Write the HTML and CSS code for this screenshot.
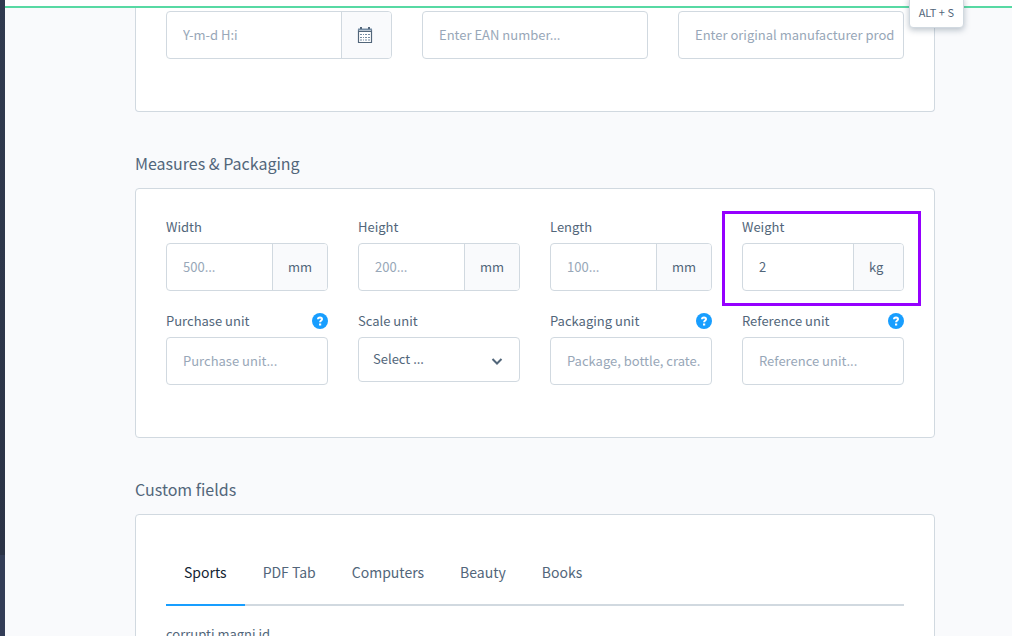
FILE: index.html
```html
<!DOCTYPE html>
<html lang="en">
<head>
<meta charset="utf-8">
<title>Product details</title>
<link rel="stylesheet" href="styles.css">
</head>
<body>
<div class="app">
  <aside class="sidebar"><div class="sidebar-menu"></div><div class="sidebar-footer"></div></aside>
  <div class="page">
    <header class="topbar"><div class="shortcut" role="tooltip">ALT + S</div></header>
    <main class="content">
      <section class="card card-continued">
        <div class="row row-three">
          <div class="control">
            <input class="input" type="text" placeholder="Y-m-d H:i" aria-label="Release date">
            <button class="addon" type="button" aria-label="Open calendar">
              <svg class="icon" viewBox="0 0 16 16" aria-hidden="true">
                <path d="M1.500 2.500h13v13h-13z" fill="#fff" stroke="#52667a" stroke-width="1.200" stroke-linejoin="round"/>
                <path d="M1 1.500h14v2H1z" fill="#758ca3"/>
                <path d="M3 0h2v2H3zM11 0h2v2h-2z" fill="#52667a"/>
                <path d="M1 4.500h14" stroke="#52667a"/>
                <path d="M3 7.500h2M6 7.500h1M8 7.500h2M11 7.500h2M3 10.500h2M6 10.500h1M8 10.500h2M11 10.500h2M3 13h2M6 13h1M8 13h2M11 13h2" stroke="#758ca3"/>
              </svg>
            </button>
          </div>
          <div class="control"><input class="input" type="text" placeholder="Enter EAN number..." aria-label="EAN"></div>
          <div class="control"><input class="input input-long" type="text" placeholder="Enter original manufacturer prod" aria-label="Manufacturer product number"></div>
        </div>
      </section>

      <h2 class="title">Measures &amp; Packaging</h2>
      <section class="card card-measures">
        <div class="row row-four">
          <div class="field">
            <div class="field-head"><label for="width">Width</label></div>
            <div class="control"><input class="input" id="width" type="text" placeholder="500..."><span class="addon">mm</span></div>
          </div>
          <div class="field">
            <div class="field-head"><label for="height">Height</label></div>
            <div class="control"><input class="input" id="height" type="text" placeholder="200..."><span class="addon">mm</span></div>
          </div>
          <div class="field">
            <div class="field-head"><label for="length">Length</label></div>
            <div class="control"><input class="input" id="length" type="text" placeholder="100..."><span class="addon">mm</span></div>
          </div>
          <div class="field field-marked">
            <div class="field-head"><label for="weight">Weight</label></div>
            <div class="control"><input class="input" id="weight" type="text" value="2"><span class="addon">kg</span></div>
          </div>
          <div class="field">
            <div class="field-head"><label for="purchase">Purchase unit</label><button class="help" type="button" aria-label="Help for purchase unit"><svg class="icon" viewBox="0 0 16 16" aria-hidden="true"><circle cx="8" cy="8" r="8" fill="#189eff"/><path d="M6 6.300C6 5 6.800 4.500 8 4.500s2 .7 2 1.700C10 7.500 8.100 7.500 8.100 9.300" fill="none" stroke="#fff" stroke-width="2"/><path d="M7 10.500h2.200v2H7z" fill="#fff"/></svg></button></div>
            <div class="control"><input class="input" id="purchase" type="text" placeholder="Purchase unit..."></div>
          </div>
          <div class="field">
            <div class="field-head"><label for="scale">Scale unit</label></div>
            <div class="control control-select">
              <select class="select" id="scale"><option>Select ...</option></select>
              <svg class="chevron" viewBox="0 0 12 12" aria-hidden="true"><path d="M1.500 4 6 8.500 10.500 4" fill="none" stroke="#52667a" stroke-width="2"/></svg>
            </div>
          </div>
          <div class="field">
            <div class="field-head"><label for="packaging">Packaging unit</label><button class="help" type="button" aria-label="Help for packaging unit"><svg class="icon" viewBox="0 0 16 16" aria-hidden="true"><circle cx="8" cy="8" r="8" fill="#189eff"/><path d="M6 6.300C6 5 6.800 4.500 8 4.500s2 .7 2 1.700C10 7.500 8.100 7.500 8.100 9.300" fill="none" stroke="#fff" stroke-width="2"/><path d="M7 10.500h2.200v2H7z" fill="#fff"/></svg></button></div>
            <div class="control"><input class="input input-long" id="packaging" type="text" placeholder="Package, bottle, crate."></div>
          </div>
          <div class="field">
            <div class="field-head"><label for="reference">Reference unit</label><button class="help" type="button" aria-label="Help for reference unit"><svg class="icon" viewBox="0 0 16 16" aria-hidden="true"><circle cx="8" cy="8" r="8" fill="#189eff"/><path d="M6 6.300C6 5 6.800 4.500 8 4.500s2 .7 2 1.700C10 7.500 8.100 7.500 8.100 9.300" fill="none" stroke="#fff" stroke-width="2"/><path d="M7 10.500h2.200v2H7z" fill="#fff"/></svg></button></div>
            <div class="control"><input class="input" id="reference" type="text" placeholder="Reference unit..."></div>
          </div>
        </div>
      </section>

      <h2 class="title">Custom fields</h2>
      <section class="card card-custom">
        <div class="tabs" role="tablist">
          <button class="tab tab-active" type="button" role="tab" aria-selected="true">Sports</button>
          <button class="tab" type="button" role="tab">PDF Tab</button>
          <button class="tab" type="button" role="tab">Computers</button>
          <button class="tab" type="button" role="tab">Beauty</button>
          <button class="tab" type="button" role="tab">Books</button>
        </div>
        <div class="field">
          <div class="field-head"><label for="custom">corrupti magni id</label></div>
          <div class="control"><input class="input" id="custom" type="text"></div>
        </div>
      </section>
    </main>
  </div>
</div>
</body>
</html>
```
FILE: styles.css
```css
* { box-sizing: border-box; }

body {
  margin: 0;
  height: 100vh;
  overflow: hidden;
  background: #f9fafc;
  color: #52667a;
  font: 13px/20px "Noto Sans CJK SC", "Noto Sans", sans-serif;
}

button, input, select { font: inherit; color: inherit; }

.app {
  display: flex;
  height: 100%;
}

.sidebar {
  flex: none;
  display: flex;
  flex-direction: column;
  width: 5px;
}

.sidebar-menu {
  flex: 1;
  background: linear-gradient(#303a4f, #2b3346);
}

.sidebar-footer {
  height: 81px;
  background: #333d57;
}

.page {
  flex: 1;
  min-width: 0;
  overflow: hidden;
}

.topbar {
  position: relative;
  height: 8px;
  background: #fff;
  border-bottom: 2px solid #57d9a3;
}

.shortcut {
  position: absolute;
  top: -4px;
  right: 48px;
  padding: 7px 9px;
  background: #fff;
  border: 1px solid #d1d9e0;
  border-radius: 4px;
  box-shadow: 0 2px 6px rgba(82, 102, 122, .4);
  font-size: 11px;
  line-height: 16px;
}

.content { padding: 0 77px 0 130px; }

.card {
  padding: 0 30px;
  background: #fff;
  border: 1px solid #d1d9e0;
  border-radius: 4px;
}

.card-continued {
  padding-top: 3px;
  padding-bottom: 52px;
  border-top: 0;
  border-top-left-radius: 0;
  border-top-right-radius: 0;
}

.card-measures {
  padding-top: 28px;
  padding-bottom: 52px;
}

.card-custom { padding-top: 30px; }

.title {
  margin: 39px 0 13px;
  font-size: 16px;
  font-weight: 400;
  line-height: 24px;
}

.row {
  display: grid;
  gap: 20px 30px;
}

.row-three { grid-template-columns: repeat(3, minmax(0, 1fr)); }
.row-four { grid-template-columns: repeat(4, minmax(0, 1fr)); }

.field { min-width: 0; }

.field-head {
  display: flex;
  justify-content: space-between;
  align-items: center;
  height: 20px;
  margin-bottom: 6px;
}

.control {
  display: flex;
  height: 48px;
  background: #fff;
  border: 1px solid #d1d9e0;
  border-radius: 4px;
  overflow: hidden;
}

.input {
  flex: 1;
  min-width: 0;
  padding: 0 16px;
  background: none;
  border: 0;
  outline: 0;
}

.input-long { padding-right: 8px; }

.input::placeholder {
  color: #98a7b8;
  opacity: 1;
}

.addon {
  display: flex;
  align-items: center;
  min-width: 50px;
  padding: 0 15px;
  background: #f9fafc;
  border: 0;
  border-left: 1px solid #d1d9e0;
}

.icon {
  display: block;
  width: 16px;
  height: 16px;
}

.help {
  padding: 0;
  background: none;
  border: 0;
}

.control-select {
  position: relative;
  height: 45px;
}

.select {
  flex: 1;
  padding: 0 40px 2px 14px;
  background: none;
  border: 0;
  outline: 0;
  appearance: none;
}

.chevron {
  position: absolute;
  top: 17px;
  right: 16px;
  width: 12px;
  height: 12px;
  pointer-events: none;
}

.field-marked { position: relative; }

.field-marked::after {
  content: "";
  position: absolute;
  inset: -6px -17px -15px -20px;
  border: 3px solid #9500ff;
  pointer-events: none;
}

.tabs {
  display: flex;
  margin-bottom: 18px;
  box-shadow: inset 0 -2px #d1d9e0;
}

.tab {
  height: 61px;
  padding: 0 18px 6px;
  background: none;
  border: 0;
  border-bottom: 2px solid transparent;
  font-size: 14px;
}

.tab-active {
  border-bottom-color: #189eff;
  color: #142433;
}
```
